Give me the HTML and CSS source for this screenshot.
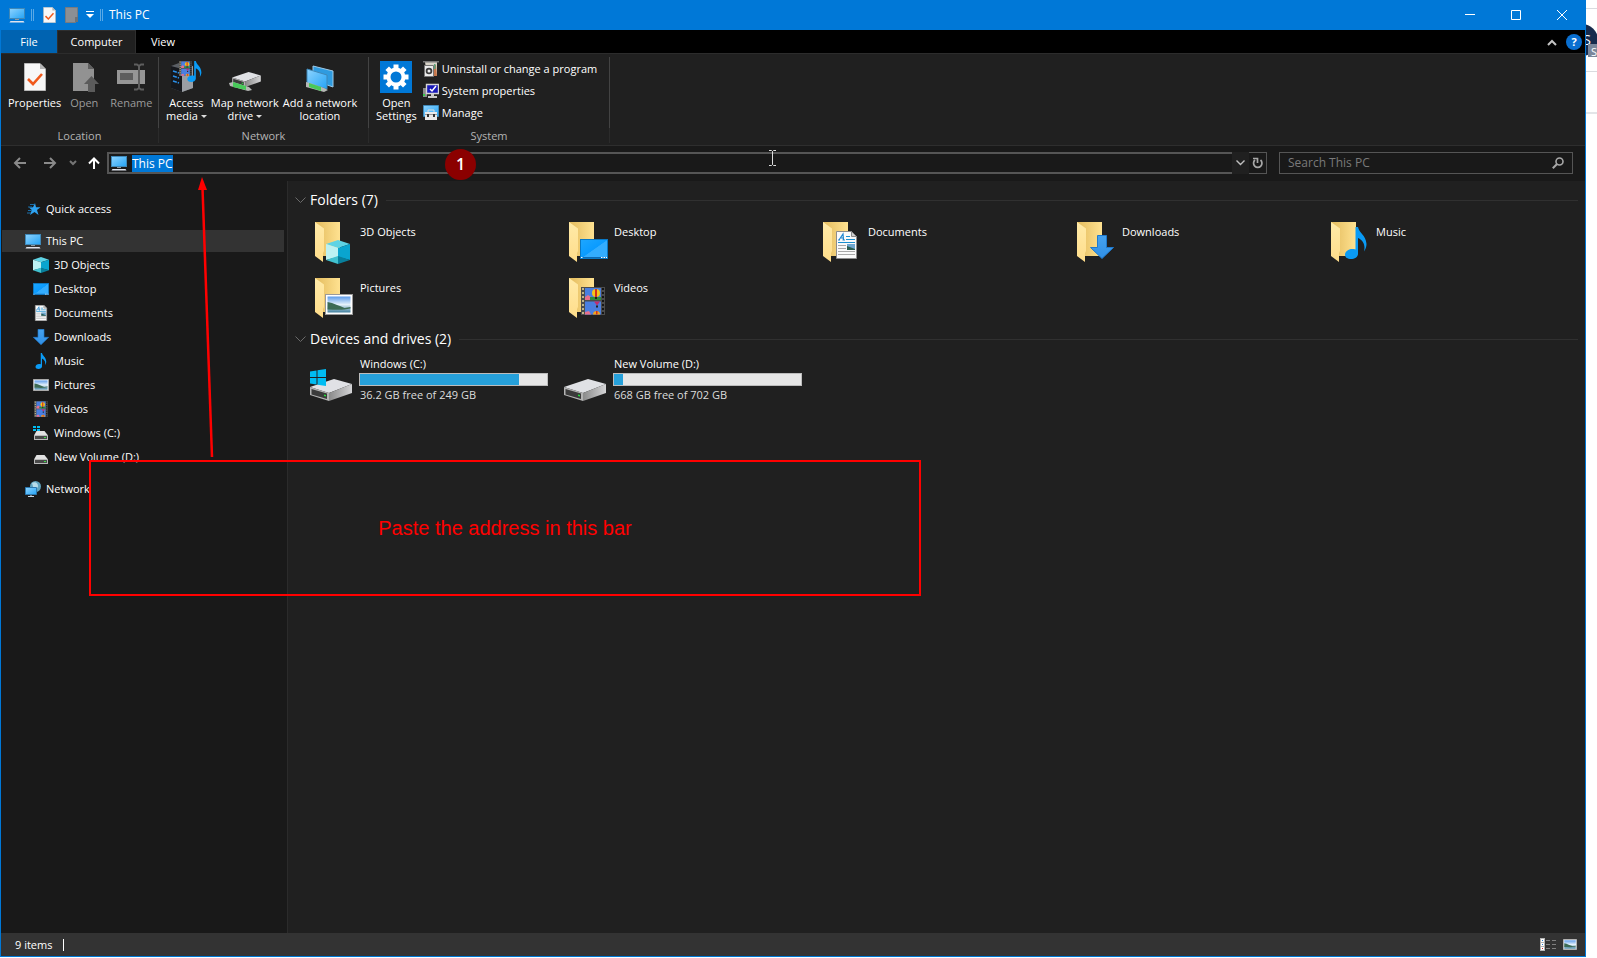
FILE: index.html
```html
<!DOCTYPE html>
<html lang="en">
<head>
    <meta charset="UTF-8">
    <meta name="viewport" content="width=device-width, initial-scale=1.0">
    <title>This PC</title>
    <link rel="stylesheet" href="styles.css">
</head>
<body>
    <!-- Shared icons -->
    <svg class="sprite" width="0" height="0" aria-hidden="true">
        <defs>
            <linearGradient id="g-screen" x1="0" y1="0" x2="1" y2="1"><stop offset="0" stop-color="#8fd4ff"/><stop offset="1" stop-color="#23a3f5"/></linearGradient>
            <linearGradient id="g-folder" x1="0" y1="0" x2="1" y2="0"><stop offset="0" stop-color="#e3bb5d"/><stop offset="1" stop-color="#ffe291"/></linearGradient>
            <linearGradient id="g-flap" x1="0" y1="0" x2="0" y2="1"><stop offset="0" stop-color="#ffeaa8"/><stop offset="1" stop-color="#ffdd8a"/></linearGradient>
            <linearGradient id="g-desk" x1="0" y1="0" x2="1" y2="1"><stop offset="0" stop-color="#1ea7ff"/><stop offset=".5" stop-color="#0a9bff"/><stop offset=".52" stop-color="#33adff"/><stop offset="1" stop-color="#33adff"/></linearGradient>
            <linearGradient id="g-sky" x1="0" y1="0" x2="0" y2="1"><stop offset="0" stop-color="#5c9bea"/><stop offset=".5" stop-color="#e4f1fb"/><stop offset="1" stop-color="#3f7f9d"/></linearGradient>
            <linearGradient id="g-down" x1="0" y1="0" x2="0" y2="1"><stop offset="0" stop-color="#46a2ee"/><stop offset="1" stop-color="#2f8fe6"/></linearGradient>
            <linearGradient id="g-side" x1="0" y1="0" x2="1" y2="0"><stop offset="0" stop-color="#8a8a8a"/><stop offset="1" stop-color="#d4d4d6"/></linearGradient>
        </defs>
        <symbol id="i-pc" viewBox="0 0 16 16">
            <rect x=".5" y="1.5" width="15" height="10" fill="url(#g-screen)" stroke="#3f88b8"/>
            <path d="M6 12h4v1H6z" fill="#8a9aa5"/>
            <path d="M1.500 14h13l1 1.500H.500z" fill="#dfe3ee"/>
        </symbol>
        <symbol id="i-cube" viewBox="0 0 24 24">
            <path d="M0 4 12 0l12 4-12 4z" fill="#5fd3e4"/>
            <path d="M0 4l12 4v9L0 20z" fill="#bdf1f2"/>
            <path d="M24 4 12 8v9l12 3z" fill="#0aa5cf"/>
            <path d="M0 20l12-4v8z" fill="#41c1cf"/>
            <path d="M24 20l-12-4v8z" fill="#087f9c"/>
        </symbol>
        <symbol id="i-desktop" viewBox="0 0 28 20" preserveAspectRatio="none">
            <rect x=".5" y=".5" width="27" height="19" fill="url(#g-desk)" stroke="#0a78c4"/>
            <path d="M1 18h26v1H1z" fill="#0b69b5"/>
            <path d="M1 18h1.500v1H1zM21 18h1.500v1H21zM23.500 18H25v1h-1.500zM25.800 18H27v1h-1.200z" fill="#fff"/>
        </symbol>
        <symbol id="i-doc" viewBox="0 0 21 28">
            <path d="M.5.5h15l5 5v22H.5z" fill="#fafafa" stroke="#8c8c8c"/>
            <path d="M15.500.5v5h5z" fill="#cfcfcf" stroke="#8c8c8c"/>
            <path d="M3 9 7 3l.5 6M5 7h3M2 9h2M6.500 9h2.500" fill="none" stroke="#1f86d0" stroke-width="1.200"/>
            <path d="M10 5.500h4M10 8.500h9M2 11.500h17" stroke="#1b8fd0" stroke-width="1.200"/>
            <path d="M2 14.500h8M2 17.500h8M2 20.500h17M2 23.500h17" stroke="#a9a9a9"/>
            <path d="M11 13h8v6h-8z" fill="#6ea6cf"/><path d="M11 15l8 3v1h-8z" fill="#2c5d50"/>
        </symbol>
        <symbol id="i-down" viewBox="0 0 24 24">
            <path d="M7.500.5h9v12h7L12 23.500.5 12.500h7z" fill="url(#g-down)" stroke="#1f79cc"/>
        </symbol>
        <symbol id="i-music" viewBox="0 0 22 32">
            <path d="M10.500 0H13c1 6 8 8 8.500 17 0 3-1 5-2.500 7.500 1.500-6-.5-11-6-13.500V27c0 3-3.500 5-7 5s-6-1.500-6-4.500 3.500-5.500 7-5.500c1.500 0 2.500 0 3.500.5z" fill="#0a9bf5"/>
        </symbol>
        <symbol id="i-pic" viewBox="0 0 28 21" preserveAspectRatio="none">
            <rect x=".5" y=".5" width="27" height="20" fill="#fff" stroke="#9a9a9a"/>
            <path d="M2.500 2.500h23v16h-23z" fill="url(#g-sky)"/>
            <path d="M2.500 8c6 1 12 4 17 6l6-1v1.500c-8 2-16 1-23 1z" fill="#3c6b55"/>
        </symbol>
        <symbol id="i-video" viewBox="0 0 24 28">
            <path d="M0 0h24v28H0z" fill="#4c4c4c"/>
            <path d="M4 1h16v12H4zM4 14.500h16v13H4z" fill="#4a7fe0"/>
            <path d="M4 10l3-2 3 2 2 3H4zM4 25l4-1 2 3.500H4z" fill="#e8708c"/>
            <path d="M9 10h11v3H9z" fill="#2f8a3c"/>
            <circle cx="15" cy="6" r="4" fill="#f5c518"/><path d="M14 2h2v8h-2z" fill="#d2301f"/><path d="M14 10h2v2h-2z" fill="#222"/>
            <path d="M13 14.500h6l-3 4z" fill="#c32d6d"/><path d="M15 18.500h2v2h-2z" fill="#222"/>
            <path d="M12 27.500a3.500 3.500 0 0 1 7 0z" fill="#f5a318"/><path d="M15 24h1.500v3.500H15z" fill="#d2301f"/>
            <path d="M2 1v27" stroke="#e8d9a0" stroke-width="1.500" stroke-dasharray="2 2"/><path d="M22 1v27" stroke="#151515" stroke-width="2" stroke-dasharray="2 2"/>
        </symbol>
        <symbol id="i-drive-s" viewBox="0 0 16 16">
            <path d="M3.500 4h8L15 8.500H1z" fill="#e2e2e2"/><rect x="1" y="8" width="14" height="5" rx=".5" fill="#bababa"/>
            <path d="M2 9h12v3H2z" fill="#4a4a4a"/><path d="M11 10h2v1h-2z" fill="#3fe04a"/>
        </symbol>
        <symbol id="i-win" viewBox="0 0 16 17">
            <path d="M0 2.500 6.500 1.500V8H0zM7.500 1.300 16 0v8H7.500zM0 9h6.500v6.500L0 14.600zM7.500 9H16v8l-8.500-1.300z" fill="#00bcf2"/>
        </symbol>
        <symbol id="i-drive" viewBox="0 0 42 22">
            <path d="M0 8 24 0l18 5-23 9z" fill="#e0e1e5"/>
            <path d="M19 14 42 5v9l-23 8z" fill="url(#g-side)"/>
            <path d="M0 8l19 6v8L0 16z" fill="#b4b4b4"/>
            <path d="M1.500 10 17 14.500V20L1.500 15.500z" fill="#3b3b3b"/>
            <path d="M14 15.500l2 .5v1.500l-2-.5z" fill="#23e03a"/>
        </symbol>
        <symbol id="i-folder" viewBox="0 0 48 48">
            <path d="M7 5h25v34H7z" fill="url(#g-folder)"/>
            <path d="M7 5l9 6.500V34l-1 2v9l-8-6z" fill="url(#g-flap)"/>
        </symbol>
        <symbol id="i-check-doc" viewBox="0 0 22 28">
            <path d="M.5.5H16l5.500 5.500v21.500H.5z" fill="#f7f7f7" stroke="#b9b9b9"/>
            <path d="M16 .5V6h5.500z" fill="#b5b5b5"/>
            <path d="M4 16l5 5 9-10" fill="none" stroke="#f0591c" stroke-width="2.600"/>
        </symbol>
    </svg>

    <!-- Page behind the window -->
    <div class="backdrop" aria-hidden="true">
        <div class="backdrop-line"></div>
        <div class="backdrop-nav"><span class="avatar">S</span><span class="avatar-tag">S</span></div>
        <div class="backdrop-tabs"></div>
    </div>

    <div class="window">
        <header class="titlebar">
            <svg class="title-pc" width="16" height="16"><use href="#i-pc"/></svg>
            <span class="title-sep"></span>
            <svg class="title-doc" width="13" height="16"><use href="#i-check-doc"/></svg>
            <svg class="title-new" width="13" height="16" viewBox="0 0 13 16"><path d="M.5.5h12v10l-2 5H.5z" fill="#8b8f94" stroke="#777b80"/><path d="M10 10h3v5h-3z" fill="#6e7276"/></svg>
            <svg class="title-more" width="8" height="8" viewBox="0 0 8 8"><path d="M0 .5h8" stroke="#fff"/><path d="M0 3h8L4 7z" fill="#fff"/></svg>
            <span class="title-sep"></span>
            <h1 class="title-text">This PC</h1>
            <div class="window-buttons">
                <button type="button" aria-label="Minimize"><svg width="10" height="10" viewBox="0 0 10 10"><path d="M0 4.500h10" stroke="#fff"/></svg></button>
                <button type="button" aria-label="Maximize"><svg width="10" height="10" viewBox="0 0 10 10"><path d="M.5.5h9v9h-9z" fill="none" stroke="#fff"/></svg></button>
                <button type="button" aria-label="Close"><svg width="10" height="10" viewBox="0 0 10 10"><path d="M0 0l10 10M10 0 0 10" stroke="#fff"/></svg></button>
            </div>
        </header>

        <nav class="tabs">
            <button type="button" class="tab tab-file">File</button>
            <button type="button" class="tab tab-active">Computer</button>
            <button type="button" class="tab">View</button>
            <div class="tabs-right">
                <button type="button" aria-label="Collapse ribbon"><svg width="10" height="7" viewBox="0 0 10 7"><path d="M1 6l4-4 4 4" fill="none" stroke="#c4c4c4" stroke-width="2"/></svg></button>
                <button type="button" class="help" aria-label="Help">?</button>
            </div>
        </nav>

        <!-- Ribbon -->
        <section class="ribbon">
            <div class="group group-location">
                <div class="group-tools">
                    <button type="button" class="tool">
                        <svg width="32" height="32" viewBox="0 0 32 32"><use href="#i-check-doc" x="5" y="2" width="22" height="28"/></svg>
                        Properties
                    </button>
                    <button type="button" class="tool tool-off">
                        <svg width="32" height="32" viewBox="0 0 32 32"><path d="M5 2h15l6 6v22H5z" fill="#929292"/><path d="M20 2v6h6z" fill="#5f5f5f"/><path d="M23.500 15l7.500 8h-4v8h-7v-8h-4z" fill="#5b5b5b"/></svg>
                        Open
                    </button>
                    <button type="button" class="tool tool-off">
                        <svg width="32" height="32" viewBox="0 0 32 32"><path d="M2 9h28v14H2z" fill="#969696"/><path d="M5 12h13v7H5z" fill="#5e5e5e"/><path d="M19 3.500h3l2 1.500 2-1.500h3M24 5v23M19 28.500h3l2-1.500 2 1.500h3" fill="none" stroke="#5e5e5e" stroke-width="2"/></svg>
                        Rename
                    </button>
                </div>
                <div class="group-name">Location</div>
            </div>
            <div class="group group-network">
                <div class="group-tools">
                    <button type="button" class="tool">
                        <svg width="32" height="32" viewBox="0 0 32 32">
                            <path d="M1 5l8-3 14 3v22l-11 4-11-4z" fill="#5a5e64"/><path d="M1 5l11 3v23L1 27z" fill="#16181d"/><path d="M12 8l11-3v22l-11 4z" fill="#9a9ea4"/>
                            <path d="M3 10l6 2M3 15l6 2M3 20l6 2" stroke="#2a8fe8" stroke-width="1.500" stroke-dasharray="4 1"/>
                            <use href="#i-video" x="9" y="0" width="13" height="15"/>
                            <use href="#i-music" x="17" y="0" width="15" height="21"/>
                        </svg>
                        Access<br>media <i class="arrow"></i>
                    </button>
                    <button type="button" class="tool">
                        <svg width="32" height="32" viewBox="0 0 32 32">
                            <use href="#i-drive" x="3" y="11" width="29" height="15"/>
                            <path d="M0 22l4-1 16 5 3 3-4 1L1 25z" fill="#b5b8b5"/><path d="M4 21l13 4v4L4 26z" fill="#48c95a"/>
                        </svg>
                        Map network<br>drive <i class="arrow"></i>
                    </button>
                    <button type="button" class="tool">
                        <svg width="32" height="32" viewBox="0 0 32 32">
                            <path d="M9 5l20 5v16L9 19z" fill="#2f9be0" stroke="#9fcbe8"/><path d="M3 8l20 6v14L3 22z" fill="url(#g-screen)" stroke="#3f88b8"/>
                            <path d="M2 21l4 1 14 5 4 2-4 2L2 26z" fill="#b5b8b5"/><path d="M5 22l12 4v4L5 26z" fill="#48c95a"/>
                        </svg>
                        Add a network<br>location
                    </button>
                </div>
                <div class="group-name">Network</div>
            </div>
            <div class="group group-system">
                <div class="group-tools">
                    <button type="button" class="tool">
                        <svg width="32" height="32" viewBox="0 0 32 32">
                            <path d="M0 0h32v32H0z" fill="#0078d7"/>
                            <circle cx="16" cy="16" r="7.500" fill="none" stroke="#fff" stroke-width="4"/>
                            <g stroke="#fff" stroke-width="5"><path d="M16 3.500v4M16 24.500v4M3.500 16h4M24.500 16h4M7.200 7.200l2.800 2.800M22 22l2.800 2.800M7.200 24.800 10 22M22 10l2.800-2.800"/></g>
                        </svg>
                        Open<br>Settings
                    </button>
                    <div class="small-tools">
                        <button type="button" class="small-tool">
                            <svg width="16" height="16" viewBox="0 0 16 16"><path d="M2 1h12v14H4z" fill="#d8d3c8"/><path d="M11 4h2l1 11h-3z" fill="#c4754a"/><path d="M11 3h1.500v5H11z" fill="#5aa37c"/><path d="M0 0h16v1.500H0z" fill="#777"/><path d="M1.500 4.500h9v11h-9z" fill="#ececec" stroke="#777"/><circle cx="6" cy="10" r="3.300" fill="#3b3b3b"/><circle cx="6" cy="10" r="1.500" fill="#eee"/></svg>
                            Uninstall or change a program
                        </button>
                        <button type="button" class="small-tool">
                            <svg width="16" height="16" viewBox="0 0 16 16"><path d="M0 5h4v9H0z" fill="#8c8c8c"/><path d="M3.500 1.500h12v9h-12z" fill="#1717b8" stroke="#d5d5d5" stroke-width="1.400"/><path d="M7 6l2 2 4-5" fill="none" stroke="#fff" stroke-width="1.500"/><path d="M8 11h3v2h3v2H5v-2h3z" fill="#c9c9c9"/><path d="M0 11h2v2H0z" fill="#35c84a"/></svg>
                            System properties
                        </button>
                        <button type="button" class="small-tool">
                            <svg width="16" height="16" viewBox="0 0 16 16"><path d="M.5.5h15v11H.5z" fill="url(#g-screen)" stroke="#3f88b8"/><path d="M5 7V5h6v2" fill="none" stroke="#ddd"/><path d="M2 7h12v8H2z" fill="#e9e9e9"/><path d="M2 9h12v1H2z" fill="#999"/><path d="M4 9h2v3H4zM10 9h2v3h-2z" fill="#333"/></svg>
                            Manage
                        </button>
                    </div>
                </div>
                <div class="group-name">System</div>
            </div>
        </section>

        <!-- Address bar -->
        <section class="address-row">
            <div class="nav-buttons">
                <button type="button" aria-label="Back"><svg width="14" height="12" viewBox="0 0 14 12"><path d="M13 6H2M7 1L2 6l5 5" fill="none" stroke="#8a8a8a" stroke-width="2"/></svg></button>
                <button type="button" aria-label="Forward"><svg width="14" height="12" viewBox="0 0 14 12"><path d="M1 6h11M7 1l5 5-5 5" fill="none" stroke="#8a8a8a" stroke-width="2"/></svg></button>
                <button type="button" aria-label="Recent locations" class="nav-recent"><svg width="8" height="6" viewBox="0 0 8 6"><path d="M1 1l3 3 3-3" fill="none" stroke="#757575" stroke-width="2"/></svg></button>
                <button type="button" aria-label="Up"><svg width="12" height="12" viewBox="0 0 12 12"><path d="M6 12V1.500M1 6.500l5-5 5 5" fill="none" stroke="#fff" stroke-width="2"/></svg></button>
            </div>
            <form class="address">
                <div class="address-box">
                    <svg width="16" height="16"><use href="#i-pc"/></svg>
                    <input type="text" id="address" aria-label="Address" value="This PC" spellcheck="false" autocomplete="off">
                </div>
                <button type="button" class="address-drop" aria-label="Previous locations"><svg width="9" height="6" viewBox="0 0 9 6"><path d="M.5.5l4 4 4-4" fill="none" stroke="#c0c0c0" stroke-width="1.400"/></svg></button>
                <button type="button" class="address-refresh" aria-label="Refresh"><svg width="11" height="12" viewBox="0 0 11 12"><path d="M8.500 3a4.200 4.200 0 1 1-5.500 0" fill="none" stroke="#a8a8a8" stroke-width="1.700"/><path d="M1 1.500h4.500V6" fill="none" stroke="#a8a8a8" stroke-width="1.700"/></svg></button>
            </form>
            <form class="search">
                <input type="text" aria-label="Search This PC" placeholder="Search This PC">
                <svg width="12" height="12" viewBox="0 0 12 12"><circle cx="7.500" cy="4.500" r="3.500" fill="none" stroke="#a8a8a8" stroke-width="1.600"/><path d="M5 7L.8 11.200" stroke="#a8a8a8" stroke-width="2"/></svg>
            </form>
        </section>

        <div class="main">
            <!-- Navigation pane -->
            <nav class="sidebar">
                <a href="#" class="side-item side-quick"><svg width="16" height="16" viewBox="0 0 16 16"><path d="M10 2l1 4.200h4.500L12 9l1.500 5-4-3-4.500 3 1.800-5L4 6.500l4-.3z" fill="#2ea3f2"/><path d="M5 3.500h4M3 6h4M3 9.500h4M2 12h4" stroke="#1b6ea8"/></svg>Quick access</a>
                <a href="#" class="side-item side-active"><svg width="16" height="16"><use href="#i-pc"/></svg>This PC</a>
                <a href="#" class="side-item side-child"><svg width="16" height="16"><use href="#i-cube"/></svg>3D Objects</a>
                <a href="#" class="side-item side-child"><svg width="16" height="16"><use href="#i-desktop" y="2" width="16" height="12"/></svg>Desktop</a>
                <a href="#" class="side-item side-child"><svg width="16" height="16"><use href="#i-doc"/></svg>Documents</a>
                <a href="#" class="side-item side-child"><svg width="16" height="16"><use href="#i-down"/></svg>Downloads</a>
                <a href="#" class="side-item side-child"><svg width="16" height="16"><use href="#i-music"/></svg>Music</a>
                <a href="#" class="side-item side-child"><svg width="16" height="16"><use href="#i-pic" y="2" width="16" height="12"/></svg>Pictures</a>
                <a href="#" class="side-item side-child"><svg width="16" height="16"><use href="#i-video"/></svg>Videos</a>
                <a href="#" class="side-item side-child"><svg width="16" height="16"><use href="#i-drive-s" y="2"/><path d="M0 1h3v2H0zM4 1h3v2H4zM0 4h3v2H0zM4 4h3v2H4z" fill="#00bcf2"/></svg>Windows (C:)</a>
                <a href="#" class="side-item side-child"><svg width="16" height="16"><use href="#i-drive-s" y="2"/></svg>New Volume (D:)</a>
                <a href="#" class="side-item side-network"><svg width="16" height="16" viewBox="0 0 16 16"><circle cx="10.500" cy="5.500" r="5.500" fill="#5fa3bf"/><path d="M7 2c3-2 6 0 6 3s-3 2-4 4z" fill="#b7dcea"/><path d="M.5 6.500h11v7H.5z" fill="url(#g-screen)" stroke="#2b79b0"/><path d="M3 15.500h6M6 14v1" stroke="#c5d5e0"/></svg>Network</a>
            </nav>

            <main class="content">
                <section>
                    <h2 class="section-title"><svg width="11" height="7" viewBox="0 0 11 7"><path d="M.5.5l5 5 5-5" fill="none" stroke="#6b6b6b"/></svg>Folders (7)</h2>
                    <div class="items">
                        <a href="#" class="item"><svg width="48" height="48"><use href="#i-folder"/><use href="#i-cube" x="18" y="23" width="24" height="24"/></svg>3D Objects</a>
                        <a href="#" class="item"><svg width="48" height="48"><use href="#i-folder"/><use href="#i-desktop" x="18" y="22" width="28" height="20"/></svg>Desktop</a>
                        <a href="#" class="item"><svg width="48" height="48"><use href="#i-folder"/><use href="#i-doc" x="20" y="14" width="21" height="28"/></svg>Documents</a>
                        <a href="#" class="item"><svg width="48" height="48"><use href="#i-folder"/><use href="#i-down" x="20" y="18" width="24" height="24"/></svg>Downloads</a>
                        <a href="#" class="item"><svg width="48" height="48"><use href="#i-folder"/><use href="#i-music" x="21" y="10" width="22" height="32"/></svg>Music</a>
                        <a href="#" class="item"><svg width="48" height="48"><use href="#i-folder"/><use href="#i-pic" x="17" y="21" width="28" height="21"/></svg>Pictures</a>
                        <a href="#" class="item"><svg width="48" height="48"><use href="#i-folder"/><use href="#i-video" x="19" y="14" width="24" height="28"/></svg>Videos</a>
                    </div>
                </section>
                <section>
                    <h2 class="section-title"><svg width="11" height="7" viewBox="0 0 11 7"><path d="M.5.5l5 5 5-5" fill="none" stroke="#6b6b6b"/></svg>Devices and drives (2)</h2>
                    <div class="items">
                        <a href="#" class="item drive">
                            <svg width="48" height="48"><use href="#i-drive" x="2" y="23" width="42" height="22"/><use href="#i-win" x="2" y="13" width="16" height="17"/></svg>
                            <span class="drive-info"><span class="drive-name">Windows (C:)</span><span class="bar"><span class="bar-used" style="width: 85%"></span></span><span class="drive-free">36.2 GB free of 249 GB</span></span>
                        </a>
                        <a href="#" class="item drive">
                            <svg width="48" height="48"><use href="#i-drive" x="2" y="23" width="42" height="22"/></svg>
                            <span class="drive-info"><span class="drive-name">New Volume (D:)</span><span class="bar"><span class="bar-used" style="width: 5%"></span></span><span class="drive-free">668 GB free of 702 GB</span></span>
                        </a>
                    </div>
                </section>
            </main>
        </div>

        <footer class="status">
            <span class="status-count">9 items</span>
            <div class="views">
                <button type="button" aria-label="Details view"><svg width="16" height="13" viewBox="0 0 16 13"><path d="M0 0h5v13H0z" fill="#b5b5b5"/><path d="M1 1h3v3H1zM1 5h3v3H1zM1 9h3v3H1z" fill="#fff"/><path d="M2 2h1v1H2zM2 6h1v1H2z" fill="#2b7cd0"/><path d="M2 10h1v1H2z" fill="#d02b2b"/><path d="M6 2.500h4M12 2.500h4M6 6.500h4M12 6.500h4M6 10.500h4M12 10.500h4" stroke="#808080"/></svg></button>
                <button type="button" aria-label="Large icons view"><svg width="14" height="11"><use href="#i-pic" width="14" height="11"/></svg></button>
            </div>
        </footer>
    </div>

    <!-- Annotations over the window -->
    <svg class="note-arrow" width="24" height="282" viewBox="0 0 24 282"><path d="M17 280L7.500 11" stroke="#f00" stroke-width="2.500"/><path d="M7 0l5 13H3z" fill="#f00"/></svg>
    <div class="note-box"><p>Paste the address in this bar</p></div>
    <span class="note-step">1</span>
    <svg class="text-cursor" width="9" height="16" viewBox="0 0 9 16"><path d="M1 .5h2.500l1 1 1-1H8M4.500 1.500v13M1 15.500h2.500l1-1 1 1H8" fill="none" stroke="#ddd"/></svg>

    <script>
        // Start with the address selected
        const address = document.getElementById('address');
        address.focus();
        address.select();
    </script>
</body>
</html>
```

FILE: styles.css
```css
* {
    box-sizing: border-box;
}

body {
    margin: 0;
    position: relative;
    min-height: 100vh;
    background-color: #fff;
    color: #fff;
    font-family: "Open Sans", "Noto Sans", sans-serif;
    font-size: 11px;
    line-height: 16px;
}

button,
input {
    font: inherit;
    color: inherit;
    background: none;
    border: none;
    padding: 0;
    margin: 0;
}

a {
    color: inherit;
    text-decoration: none;
}

svg {
    flex: none;
}

.sprite {
    position: absolute;
}

/* Page behind the window */
.backdrop {
    position: absolute;
    top: 0;
    right: 0;
    width: 40px;
    overflow: hidden;
}

.backdrop-line {
    height: 9px;
    border-bottom: 1px solid #d9dbdf;
}

.backdrop-nav {
    position: relative;
    height: 63px;
    border-bottom: 1px solid #d9dbdf;
}

.backdrop-tabs {
    height: 42px;
    border-bottom: 2px solid #e3e5e8;
}

.avatar {
    position: absolute;
    top: 15px;
    right: -1px;
    width: 32px;
    height: 32px;
    border-radius: 50%;
    background-color: #172b4d;
    line-height: 32px;
    font-size: 14px;
    text-align: center;
    padding-left: 10px;
}

.avatar-tag {
    position: absolute;
    top: 35px;
    right: 0;
    width: 9px;
    height: 13px;
    line-height: 15px;
    background-color: #7a869a;
    text-align: right;
}

/* Window */
.window {
    position: relative;
    display: flex;
    flex-direction: column;
    min-height: calc(100vh - 1px);
    margin-right: 11px;
    border: 1px solid #0078d7;
    border-top: none;
    background-color: #191919;
}

.titlebar {
    display: flex;
    align-items: center;
    height: 30px;
    padding-left: 8px;
    background-color: #0078d7;
}

.title-sep {
    width: 3px;
    height: 12px;
    margin: 0 9px 0 6px;
    border: 1px solid #5aa9e6;
    border-width: 0 1px;
}

.title-doc {
    margin-right: 9px;
}

.title-new {
    margin-right: 8px;
}

.title-text {
    margin: 0 0 0 -3px;
    font-size: 12px;
    font-weight: 400;
}

.window-buttons {
    display: flex;
    margin-left: auto;
}

.window-buttons button {
    display: flex;
    align-items: center;
    justify-content: center;
    width: 46px;
    height: 28px;
}

/* Tabs */
.tabs {
    display: flex;
    height: 23px;
    background-color: #000;
}

.tab {
    padding: 0 15px;
    line-height: 22px;
}

.tab-file {
    width: 56px;
    background-color: #0063b1;
}

.tab-active {
    width: 79px;
    padding: 0;
    border: 1px solid #2e2e2e;
    border-bottom: none;
    background-color: #202020;
}

.tabs-right {
    display: flex;
    align-items: center;
    gap: 9px;
    margin-left: auto;
    padding-right: 3px;
}

.tabs-right button {
    display: block;
}

.help {
    width: 16px;
    height: 16px;
    border-radius: 50%;
    background-color: #0a6fd0;
    font-weight: 700;
    line-height: 16px;
}

/* Ribbon */
.ribbon {
    display: flex;
    height: 93px;
    padding-top: 3px;
    border-top: 1px solid #2c2c2c;
    border-bottom: 1px solid #2e2e2e;
    background-color: #202020;
}

.group {
    display: flex;
    flex-direction: column;
}

.group-location {
    width: 158px;
}

.group-network {
    width: 210px;
}

.group-system {
    width: 241px;
}

.group-tools {
    display: flex;
    height: 71px;
    padding: 1px 0 0 5px;
    border-right: 1px solid #434343;
}

.group-name {
    height: 15px;
    border-right: 1px solid #2b2b2b;
    color: #b4b4b4;
    text-align: center;
}

.tool {
    display: flow-root;
    align-self: flex-start;
    margin-top: 3px;
    padding: 0 2px;
    line-height: 13px;
    white-space: nowrap;
}

.tool svg {
    display: block;
    margin: 0 auto 3px;
}

.tool-off {
    padding: 0 5px;
    color: #9b9b9b;
}

.arrow {
    display: inline-block;
    vertical-align: 2px;
    border: 3px solid transparent;
    border-top-color: #ddd;
    border-bottom: none;
}

.small-tools {
    display: flex;
    flex-direction: column;
    padding-left: 4px;
}

.small-tool {
    display: flex;
    align-items: center;
    gap: 3px;
    height: 22px;
    white-space: nowrap;
}

/* Address bar */
.address-row {
    display: flex;
    height: 35px;
    padding: 6px 12px 7px 0;
}

.nav-buttons {
    display: flex;
    align-items: center;
    width: 106px;
    padding-left: 12px;
    gap: 16px;
}

.nav-buttons button {
    display: flex;
}

.nav-buttons .nav-recent {
    margin: 0 -5px 0 -4px;
}

.address {
    display: flex;
    flex: 1;
}

.address-box {
    display: flex;
    flex: 1;
    align-items: center;
    gap: 5px;
    padding-left: 2px;
    border: 2px solid #555;
    border-right: none;
}

.address-box input {
    flex: 1;
    height: 18px;
    padding-top: 1px;
    outline: none;
    font-size: 12px;
}

.address-box input::selection {
    background-color: #0078d7;
    color: #fff;
}

.address-drop,
.address-refresh {
    display: flex;
    align-items: center;
    justify-content: center;
}

.address-drop {
    width: 17px;
    background-color: #202020;
}

.address-refresh {
    width: 18px;
    border: 1px solid #555;
    border-left: none;
}

.search {
    display: flex;
    align-items: center;
    width: 294px;
    margin-left: 12px;
    padding: 0 8px;
    border: 1px solid #555;
}

.search input {
    flex: 1;
    min-width: 0;
    font-size: 12px;
}

.search input::placeholder {
    color: #7a7a7a;
    opacity: 1;
}

/* Navigation pane */
.main {
    display: flex;
    flex: 1;
}

.sidebar {
    display: flex;
    flex-direction: column;
    gap: 2px;
    width: 286px;
    padding: 17px 3px 0 1px;
}

.side-item {
    display: flex;
    align-items: center;
    gap: 5px;
    height: 22px;
    padding-left: 23px;
}

.side-quick {
    margin-bottom: 8px;
}

.side-active {
    background-color: #333;
}

.side-child {
    padding-left: 31px;
}

.side-network {
    margin-top: 8px;
}

/* Folders and drives */
.content {
    flex: 1;
    padding: 9px 7px 0 7px;
    border-left: 1px solid #2b2b2b;
    background-color: #202020;
}

.section-title {
    display: flex;
    align-items: center;
    gap: 4px;
    height: 20px;
    margin: 0 0 3px;
    font-size: 14px;
    font-weight: 400;
}

.section-title::after {
    content: "";
    flex: 1;
    height: 1px;
    margin-left: 4px;
    background-color: #303030;
}

.items {
    display: grid;
    grid-template-columns: repeat(auto-fill, 254px);
    grid-auto-rows: 56px;
    margin: 0 -7px 4px 13px;
}

.item {
    display: flex;
    gap: 4px;
    padding-top: 4px;
    line-height: 30px;
}

.drive {
    gap: 3px;
    line-height: 16px;
}

.drive-info {
    width: 189px;
}

.drive-name,
.drive-free {
    display: block;
    padding-left: 1px;
}

.drive-free {
    padding-top: 1px;
    color: #dcdcdc;
}

.bar {
    display: block;
    height: 13px;
    margin-top: 1px;
    border: 1px solid #bcbcbc;
    background-color: #e6e6e6;
}

.bar-used {
    display: block;
    height: 100%;
    background-color: #26a0da;
}

/* Status bar */
.status {
    display: flex;
    align-items: center;
    height: 23px;
    padding: 0 8px 0 14px;
    background-color: #333;
}

.status-count {
    padding-right: 11px;
    border-right: 1px solid #fff;
    line-height: 12px;
}

.views {
    display: flex;
    align-items: center;
    gap: 7px;
    margin-left: auto;
}

.views button {
    display: flex;
}

/* Annotations */
.note-arrow {
    position: absolute;
    left: 195px;
    top: 177px;
}

.note-box {
    position: absolute;
    left: 89px;
    top: 460px;
    width: 832px;
    height: 136px;
    border: 2px solid #f00;
    color: #f00;
    font-family: "Liberation Sans", Arial, sans-serif;
    font-size: 20px;
    line-height: 132px;
    text-align: center;
}

.note-box p {
    margin: 0;
}

.note-step {
    position: absolute;
    left: 445px;
    top: 149px;
    width: 31px;
    height: 31px;
    border-radius: 50%;
    background-color: #8b0000;
    font-size: 16px;
    font-weight: 600;
    line-height: 31px;
    text-align: center;
}

.text-cursor {
    position: absolute;
    left: 768px;
    top: 150px;
}
```
